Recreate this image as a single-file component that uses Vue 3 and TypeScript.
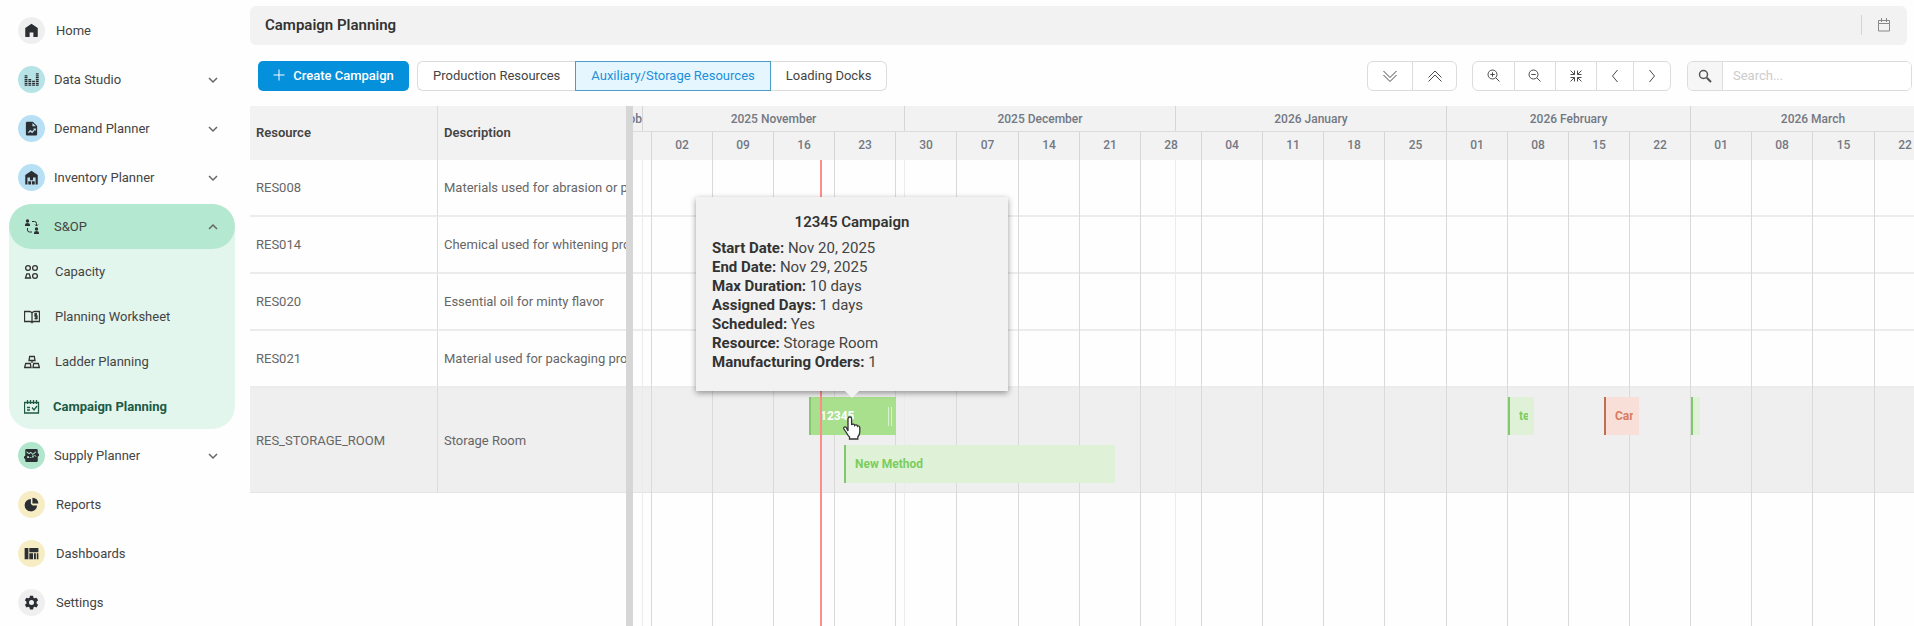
<script setup lang="ts">
import { ref } from 'vue'

interface NavItem {
  label: string
  icon: string
  tone: string
  expandable?: boolean
}

interface Bar {
  name: string
  start: number
  end: number
  lane: number
  kind: 'hover' | 'green' | 'red'
}

interface Resource {
  id: string
  description: string
  bars: Bar[]
}

const topNav: NavItem[] = [
  { label: 'Home', icon: 'home', tone: 'grey' },
  { label: 'Data Studio', icon: 'data', tone: 'teal', expandable: true },
  { label: 'Demand Planner', icon: 'demand', tone: 'blue', expandable: true },
  { label: 'Inventory Planner', icon: 'inventory', tone: 'blue', expandable: true },
]

const subNav = [
  { label: 'Capacity', icon: 'capacity' },
  { label: 'Planning Worksheet', icon: 'worksheet' },
  { label: 'Ladder Planning', icon: 'ladder' },
  { label: 'Campaign Planning', icon: 'campaign' },
]

const bottomNav: NavItem[] = [
  { label: 'Supply Planner', icon: 'supply', tone: 'green', expandable: true },
  { label: 'Reports', icon: 'reports', tone: 'yellow' },
  { label: 'Dashboards', icon: 'dashboards', tone: 'yellow' },
  { label: 'Settings', icon: 'settings', tone: 'grey' },
]

const icons: Record<string, string> = {
  home: 'M12 1 2 8v13q0 1.500 1.500 1.500H9V15h6v7.500h5.500Q22 22.500 22 21V8z',
  data: 'M1 5h4.500v2H1zM1 8h4.500v2H1zM1 11h4.500v2H1zM1 14h4.500v2H1zM1 17h4.500v2H1zM1 20h4.500v2H1zM7 11h4.500v2H7zM7 14h4.500v2H7zM7 17h4.500v2H7zM7 20h4.500v2H7zM13 14h4.500v2H13zM13 17h4.500v2H13zM13 20h4.500v2H13zM19 2h4.500v2H19zM19 5h4.500v2H19zM19 8h4.500v2H19zM19 11h4.500v2H19zM19 14h4.500v2H19zM19 17h4.500v2H19zM19 20h4.500v2H19z',
  demand: 'M14 1H5a2 2 0 0 0-2 2v18a2 2 0 0 0 2 2h14a2 2 0 0 0 2-2V8zM13.500 3 19 8.500h-5.500zM6.500 18l3.500-4 3 2.500 3-3.500-1.500-1H19v4l-1.500-1.500-4.300 5-3.200-2.500-2.300 2.500z',
  inventory: 'M12 1 2 8v15h3.500V12h13v11H22V8zM9.500 12h5v4.500h-5zM6.800 18h4.500v5H6.800zM12.700 18h4.500v5h-4.500z',
  supply: 'M4 1.500h16a2 2 0 0 1 2 2v5l2 1v3l-2 1v7a2 2 0 0 1-2 2H4a2 2 0 0 1-2-2v-3l-2-1v-3l2-1v-9a2 2 0 0 1 2-2zM4 5l4 3 3-2 3 3 5-4v2l-5 4-3-3-3 2-4-3zM5 13h3v3H5zM13 12h2.500v3H13zM17 11l3 2-1 1-3-2zM9 14.500h3v1H9z',
  reports: 'M11 3a10 10 0 1 0 10 10.500H14L11 11zM13.500 1v9.500H23A9.500 9.500 0 0 0 13.500 1z',
  dashboards: 'M1 3h6v18H1zM8.500 3H23v7H8.500zM8.500 11.500h6V21h-6zM16 11.500h3V21h-3zM20.500 11.500H23V21h-2.500z',
  settings: 'M9.500 1h5l.6 3.200 1.900 1.100 3.100-1.100 2.500 4.300-2.500 2.100v2.800l2.500 2.100-2.500 4.300-3.100-1.100-1.900 1.100-.6 3.300h-5l-.6-3.300L7 18.700l-3.100 1.100-2.500-4.300 2.500-2.100v-2.800L1.400 8.500l2.500-4.300L7 5.300l1.900-1.100zM12 8a4 4 0 1 0 0 8 4 4 0 0 0 0-8z',
}

const resourceTypes = ['Production Resources', 'Auxiliary/Storage Resources', 'Loading Docks']
const activeType = ref('Auxiliary/Storage Resources')
const search = ref('')

/* Timeline scale: days are counted from 1 November 2025. */
const pxPerDay = 8.735
const firstDay = 10
const at = (day: number): number => Math.round(firstDay + day * pxPerDay)

const months = [
  { label: '2025 November', start: 0, end: 30 },
  { label: '2025 December', start: 30, end: 61 },
  { label: '2026 January', start: 61, end: 92 },
  { label: '2026 February', start: 92, end: 120 },
  { label: '2026 March', start: 120, end: 148 },
]
const weeks = [
  '02', '09', '16', '23', '30', '07', '14', '21', '28', '04', '11',
  '18', '25', '01', '08', '15', '22', '01', '08', '15', '22',
].map((label, i) => ({ label, start: 1 + i * 7, end: 8 + i * 7 }))

const today = 20.4

const resources: Resource[] = [
  { id: 'RES008', description: 'Materials used for abrasion or polishing', bars: [] },
  { id: 'RES014', description: 'Chemical used for whitening products', bars: [] },
  { id: 'RES020', description: 'Essential oil for minty flavor', bars: [] },
  { id: 'RES021', description: 'Material used for packaging products', bars: [] },
  {
    id: 'RES_STORAGE_ROOM',
    description: 'Storage Room',
    bars: [
      { name: '12345', start: 19, end: 29, lane: 0, kind: 'hover' },
      { name: 'New Method', start: 23, end: 54, lane: 1, kind: 'green' },
      { name: 'test', start: 99, end: 102, lane: 0, kind: 'green' },
      { name: 'Campaign', start: 110, end: 114, lane: 0, kind: 'red' },
      { name: '', start: 120, end: 121, lane: 0, kind: 'green' },
    ],
  },
]

const details = [
  ['Start Date', 'Nov 20, 2025'],
  ['End Date', 'Nov 29, 2025'],
  ['Max Duration', '10 days'],
  ['Assigned Days', '1 days'],
  ['Scheduled', 'Yes'],
  ['Resource', 'Storage Room'],
  ['Manufacturing Orders', '1'],
]

const span = (start: number, end: number) => ({ width: `${at(end) - at(start)}px` })
const barBox = (b: Bar) => ({ left: `${at(b.start)}px`, width: `${at(b.end) - at(b.start)}px` })
const barCentre = (b: Bar) => ({ left: `${Math.floor((at(b.start) + at(b.end)) / 2)}px` })
</script>

<template>
  <div class="page">
    <nav class="sidebar" aria-label="Main">
      <a v-for="item in topNav" :key="item.label" href="#" class="item" :class="{ leaf: !item.expandable }">
        <span class="disc" :class="item.tone">
          <svg viewBox="0 0 24 24" width="15" height="15" fill-rule="evenodd"><path :d="icons[item.icon]" /></svg>
        </span>
        <span class="label">{{ item.label }}</span>
        <svg v-if="item.expandable" class="chevron" viewBox="0 0 10 10" width="10" height="10"><path d="M1 3l4 4 4-4" /></svg>
      </a>

      <div class="group">
        <a href="#" class="item open">
          <span class="disc">
            <svg viewBox="0 0 16 16" width="16" height="16">
              <circle cx="3.500" cy="2" r="1.700" />
              <path d="M1 7V5.500Q1 4 3.500 4T6 5.500V7z" />
              <circle cx="12.500" cy="10" r="1.700" />
              <path d="M10 15v-1.500q0-1.500 2.500-1.500t2.500 1.500V15z" />
              <path class="line" d="M8 2.500h2.500q2 0 2 2V7M11 5.500 12.500 7 14 5.500M3.500 9v2q0 2 2 2H8" />
            </svg>
          </span>
          <span class="label">S&amp;OP</span>
          <svg class="chevron" viewBox="0 0 10 10" width="10" height="10"><path d="M1 7l4-4 4 4" /></svg>
        </a>
        <a
          v-for="item in subNav"
          :key="item.label"
          href="#"
          class="item sub"
          :class="{ current: item.icon === 'campaign' }"
        >
          <span class="glyph">
            <svg v-if="item.icon === 'capacity'" viewBox="0 0 16 16" width="16" height="16">
              <circle cx="4" cy="4" r="2.400" /><circle cx="11" cy="4" r="2.400" />
              <path d="M1.500 14 2.800 9.800h2.400L6.500 14z" /><circle cx="11" cy="12" r="2.400" />
            </svg>
            <svg v-else-if="item.icon === 'worksheet'" viewBox="0 0 16 16" width="16" height="16">
              <path d="M8 4Q7 2.500 5.500 2.500h-5v10H6q1.500 0 2 1 .5-1 2-1h5.500v-10h-5Q9 2.500 8 4zM8 4v9M13 5h-2v2h2v2.500h-2.500M12 4v6.500" />
            </svg>
            <svg v-else-if="item.icon === 'ladder'" viewBox="0 0 16 16" width="16" height="16">
              <path d="M5.700 2.500h4.600l.7 4H5zM8 6.500v2.500M1.700 9.500h4.600l.7 4H.6zM9.700 9.500h4.600l1.100 4H9z" />
            </svg>
            <svg v-else viewBox="0 0 16 16" width="16" height="16">
              <path d="M.5 3.500h14v10.500H.5zM3.500 1v4M6.500 1v4M9.500 1v4M12.500 1v4M3 8.500h3M3 11h3M8 8.500l2 2.500 3-4" />
            </svg>
          </span>
          <span class="label">{{ item.label }}</span>
        </a>
      </div>

      <a v-for="item in bottomNav" :key="item.label" href="#" class="item" :class="{ leaf: !item.expandable }">
        <span class="disc" :class="item.tone">
          <svg viewBox="0 0 24 24" width="15" height="15" fill-rule="evenodd"><path :d="icons[item.icon]" /></svg>
        </span>
        <span class="label">{{ item.label }}</span>
        <svg v-if="item.expandable" class="chevron" viewBox="0 0 10 10" width="10" height="10"><path d="M1 3l4 4 4-4" /></svg>
      </a>
    </nav>

    <main class="main">
      <header class="titlebar">
        <h1>Campaign Planning</h1>
        <button type="button" class="calendar" aria-label="Calendar">
          <svg viewBox="0 0 14 14" width="14" height="14"><path d="M1.500 2.500h11v10.500h-11zM1.500 5.500h11M4.500 0v4M9.500 0v4" /></svg>
        </button>
      </header>

      <div class="toolbar">
        <button type="button" class="create">
          <svg viewBox="0 0 12 12" width="12" height="12"><path d="M6 .5v11M.5 6h11" /></svg>
          Create Campaign
        </button>
        <div class="segments" role="group" aria-label="Resource type">
          <button
            v-for="type in resourceTypes"
            :key="type"
            type="button"
            :class="{ active: type === activeType }"
            @click="activeType = type"
          >
            {{ type }}
          </button>
        </div>

        <div class="tools expand">
          <button type="button" aria-label="Expand all">
            <svg viewBox="0 0 16 16" width="16" height="16"><path d="M1.500 3 8 9.500 14.500 3M1.500 7 8 13.500 14.500 7" /></svg>
          </button>
          <button type="button" aria-label="Collapse all">
            <svg viewBox="0 0 16 16" width="16" height="16"><path d="M1.500 9.500 8 3l6.500 6.500M1.500 13.500 8 7l6.500 6.500" /></svg>
          </button>
        </div>
        <div class="tools zoom">
          <button type="button" aria-label="Zoom in">
            <svg viewBox="0 0 14 14" width="14" height="14"><circle cx="5.500" cy="5.500" r="4.500" /><path d="M8.800 8.800 12.500 12.500M3.300 5.500h4.400M5.500 3.300v4.400" /></svg>
          </button>
          <button type="button" aria-label="Zoom out">
            <svg viewBox="0 0 14 14" width="14" height="14"><circle cx="5.500" cy="5.500" r="4.500" /><path d="M8.800 8.800 12.500 12.500M3.300 5.500h4.400" /></svg>
          </button>
          <button type="button" aria-label="Zoom to fit">
            <svg viewBox="0 0 14 14" width="14" height="14">
              <path d="M1.500 1.500 5.500 5.500M12.500 1.500l-4 4M1.500 12.500l4-4M12.500 12.500l-4-4M5.500 1.500v4h-4M8.500 1.500v4h4M5.500 12.500v-4h-4M8.500 12.500v-4h4" />
            </svg>
          </button>
          <button type="button" class="narrow" aria-label="Previous">
            <svg viewBox="0 0 14 14" width="14" height="14"><path d="M9.500 1 4.500 7l5 6" /></svg>
          </button>
          <button type="button" class="narrow" aria-label="Next">
            <svg viewBox="0 0 14 14" width="14" height="14"><path d="M4.500 1l5 6-5 6" /></svg>
          </button>
        </div>
        <div class="search">
          <label for="search" aria-label="Search">
            <svg viewBox="0 0 14 14" width="14" height="14"><circle cx="5.500" cy="5.500" r="4" /><path class="handle" d="M8.800 8.800 13 13" /></svg>
          </label>
          <input id="search" v-model="search" type="text" placeholder="Search..." />
        </div>
      </div>

      <section class="gantt">
        <div class="grid">
          <table>
            <thead>
              <tr>
                <th scope="col">Resource</th>
                <th scope="col">Description</th>
              </tr>
            </thead>
            <tbody>
              <tr v-for="r in resources" :key="r.id" :class="{ selected: r.bars.length }">
                <td>{{ r.id }}</td>
                <td>{{ r.description }}</td>
              </tr>
            </tbody>
          </table>
        </div>
        <div class="splitter"></div>

        <div class="timeline">
          <div class="scale months">
            <div class="cell lead" :style="{ width: `${at(0)}px` }">ob</div>
            <div v-for="m in months" :key="m.label" class="cell" :style="span(m.start, m.end)">{{ m.label }}</div>
          </div>
          <div class="scale weeks">
            <div class="cell" :style="{ width: `${at(1)}px` }"></div>
            <div v-for="w in weeks" :key="w.start" class="cell" :style="span(w.start, w.end)">{{ w.label }}</div>
          </div>

          <div class="rows">
            <div v-for="r in resources" :key="r.id" class="row" :class="{ selected: r.bars.length }">
              <template v-for="b in r.bars" :key="b.start">
                <div class="bar" :class="[b.kind, `lane${b.lane}`, { blank: !b.name }]" :style="barBox(b)">
                  <span class="name">{{ b.name }}</span>
                  <span v-if="b.kind === 'hover'" class="grip"></span>
                </div>
                <div v-if="b.kind === 'hover'" class="tooltip" role="tooltip" :style="barCentre(b)">
                  <h2>{{ b.name }} Campaign</h2>
                  <p v-for="[key, value] in details" :key="key"><b>{{ key }}:</b> {{ value }}</p>
                </div>
                <svg
                  v-if="b.kind === 'hover'"
                  class="pointer"
                  :style="barCentre(b)"
                  viewBox="0 0 18 24"
                  width="18"
                  height="24"
                >
                  <path d="M5 15V2.800a1.800 1.800 0 0 1 3.600 0V9q.4-1 1.600-.9 1.300.1 1.500 1.300.5-.7 1.500-.5 1.100.2 1.300 1.300.5-.4 1.200-.2 1.100.3 1.100 1.600v4.200q0 3-2 5.200V23H6.500v-2Q4.500 19 3.300 16.500L.9 13q-.6-1.300.5-2 1-.5 2 .6z" />
                </svg>
              </template>
            </div>

            <i v-for="m in months" :key="m.label" class="rule month" :style="{ left: `${at(m.start) - 1}px` }"></i>
            <i v-for="w in weeks" :key="w.start" class="rule" :style="{ left: `${at(w.start) - 1}px` }"></i>
            <i class="now" :style="{ left: `${at(today) - 1}px` }"></i>
          </div>
        </div>
      </section>
    </main>
  </div>
</template>

<style>
html,
body {
  margin: 0;
  background: #fefefe;
}
</style>

<style scoped>
* {
  box-sizing: border-box;
}

.page {
  display: flex;
  height: 100vh;
  overflow: hidden;
  font-family: Roboto, 'Liberation Sans', sans-serif;
  font-size: 13px;
  color: #444;
}

button,
input {
  font: inherit;
}

svg {
  display: block;
}

/* Sidebar */
.sidebar {
  display: flex;
  flex: none;
  flex-direction: column;
  gap: 4px;
  width: 250px;
  padding: 8px 15px 0 9px;
}

.item {
  display: flex;
  flex: none;
  align-items: center;
  height: 45px;
  padding: 0 17px 0 9px;
  color: #444;
  text-decoration: none;
}

.label {
  flex: 1;
  margin-left: 9px;
  white-space: nowrap;
}

.leaf .label {
  margin-left: 11px;
}

.sub .label {
  margin-left: 10px;
}

.disc {
  display: flex;
  align-items: center;
  justify-content: center;
  width: 27px;
  height: 27px;
  border-radius: 50%;
  fill: #2b2f33;
}

.grey { background: #efefef; }
.teal { background: #b5e3e6; }
.blue { background: #b7e0f4; }
.green { background: #b1e6cd; }
.yellow { background: #f6edc4; }

.line,
.chevron {
  fill: none;
  stroke: #2b2f33;
}

.chevron {
  stroke: #666;
  stroke-width: 1.5;
}

.group {
  border-radius: 23px;
  background: #e3f6ed;
}

.open {
  border-radius: 23px;
  background: #b5e8d0;
}

.glyph {
  display: flex;
  justify-content: center;
  width: 27px;
  fill: none;
  stroke: #333;
  stroke-width: 1.3;
}

.current {
  color: #205a45;
  font-weight: 700;
}

.current .label {
  margin-left: 8px;
}

.current .glyph {
  stroke: #205a45;
}

/* Title bar and toolbar */
.main {
  display: flex;
  flex: 1;
  flex-direction: column;
  min-width: 0;
}

.titlebar {
  display: flex;
  flex: none;
  align-items: center;
  justify-content: space-between;
  height: 39px;
  margin: 6px 7px 0 0;
  padding: 0 16px 2px 15px;
  border-radius: 6px;
  background: #f2f2f2;
}

h1 {
  margin: 0;
  color: #333;
  font-size: 15px;
  font-weight: 600;
}

.calendar {
  padding: 3px 0 3px 15px;
  border: 0;
  border-left: 1px solid #d4d4d4;
  background: none;
  fill: none;
  stroke: #888;
}

.toolbar {
  display: flex;
  flex: none;
  align-items: center;
  height: 30px;
  margin: 16px 2px 15px 8px;
}

.toolbar button {
  display: flex;
  align-items: center;
  justify-content: center;
  height: 30px;
  white-space: nowrap;
}

.toolbar .create {
  gap: 8px;
  width: 151px;
  padding: 0 0 2px;
  border: 0;
  border-radius: 5px;
  background: #0490da;
  color: #fff;
  font-weight: 500;
  stroke: #fff;
}

.segments {
  display: flex;
  margin-left: 8px;
}

.segments button {
  padding: 0 15px 2px;
  border: 1px solid #dcdcdc;
  background: #fff;
  color: #444;
}

.segments button:first-child {
  border-right: 0;
  border-radius: 6px 0 0 6px;
}

.segments button:last-child {
  border-left: 0;
  border-radius: 0 6px 6px 0;
}

.segments .active {
  border-color: #4b9cc8;
  background: #e6f6fe;
  color: #1c90da;
}

.tools {
  display: flex;
  margin-left: 15px;
  border: 1px solid #dcdcdc;
  border-radius: 6px;
  background: #fff;
}

.tools button {
  width: 41px;
  height: 28px;
  padding: 0;
  border: 0;
  background: none;
  fill: none;
  stroke: #4a4a4a;
}

.tools button + button {
  border-left: 1px solid #dcdcdc;
}

.tools .narrow {
  width: 37px;
}

.tools.expand {
  margin-left: auto;
}

.expand button {
  width: 44px;
}

.search {
  display: flex;
  width: 225px;
  margin-left: 16px;
  border: 1px solid #dcdcdc;
  border-radius: 6px;
  overflow: hidden;
}

.search label {
  display: flex;
  align-items: center;
  justify-content: center;
  width: 34px;
  background: #f6f6f6;
  fill: none;
  stroke: #555;
  stroke-width: 1.5;
}

.handle {
  stroke-width: 2;
}

.search input {
  flex: 1;
  min-width: 0;
  height: 28px;
  padding: 0 10px 2px;
  border: 0;
  border-left: 1px solid #dcdcdc;
  outline: 0;
}

.search input::placeholder {
  color: #ccc;
}

/* Resource table */
.gantt {
  display: flex;
  flex: 1;
  min-height: 0;
}

.grid {
  flex: none;
  width: 376px;
  overflow: hidden;
}

table {
  width: 100%;
  border-spacing: 0;
  table-layout: fixed;
}

th,
td {
  padding: 0 0 0 6px;
  overflow: hidden;
  text-align: left;
  white-space: nowrap;
}

th:first-child,
td:first-child {
  border-right: 1px solid #dcdcdc;
}

th {
  height: 54px;
  padding-bottom: 2px;
  background: #f2f2f2;
  color: #444;
  font-weight: 600;
}

td {
  height: 57px;
  border-bottom: 2px solid #ececec;
  color: #666;
}

.selected td {
  height: 105px;
  border-bottom: 1px solid #e4e4e4;
  background: #efefef;
}

.splitter {
  flex: none;
  width: 7px;
  background: #d6d6d6;
}

/* Timeline */
.timeline {
  display: flex;
  flex: 1;
  flex-direction: column;
  min-width: 0;
  overflow: hidden;
}

.scale {
  display: flex;
  flex: none;
  background: #f2f2f2;
  color: #737883;
  font-size: 12px;
  font-weight: 500;
}

.cell {
  display: flex;
  flex: none;
  align-items: center;
  justify-content: center;
  border-right: 1px solid #d6d6d6;
  overflow: hidden;
}

.months {
  height: 26px;
  border-bottom: 1px solid #dcdcdc;
}

.months .lead {
  justify-content: flex-end;
}

.weeks {
  height: 28px;
}

.weeks .cell {
  padding-bottom: 2px;
}

.rows {
  position: relative;
  flex: 1;
}

.row {
  position: relative;
  height: 57px;
  border-bottom: 2px solid #ececec;
}

.row.selected {
  height: 105px;
  border-bottom: 1px solid #e4e4e4;
  background: #efefef;
}

.rule {
  position: absolute;
  top: 0;
  bottom: 0;
  width: 1px;
  background: #dadada;
}

.month {
  background: #ebebeb;
}

.now {
  position: absolute;
  z-index: 2;
  top: 0;
  bottom: 0;
  width: 2px;
  background: #ff8c8c;
}

.bar {
  position: absolute;
  z-index: 1;
  display: flex;
  align-items: center;
  justify-content: space-between;
  height: 38px;
  padding: 0 6px 0 9px;
  border-left: 2px solid #80c86b;
  background: #dff2d8;
  color: #7bcd5c;
  font-size: 12px;
  font-weight: 700;
  white-space: nowrap;
}

.blank {
  padding: 0;
}

.name {
  min-width: 0;
  overflow: hidden;
}

.lane0 { top: 9px; }
.lane1 { top: 57px; }

.hover {
  padding-right: 4px;
  border-color: #86c870;
  background: #a9e08e;
  color: #fff;
}

.red {
  border-color: #bf6d55;
  background: #f8dfd8;
  color: #d77b61;
}

.grip {
  width: 4px;
  height: 19px;
  border: 1px solid #d9f2cd;
  border-width: 0 1px;
}

.tooltip {
  position: absolute;
  z-index: 3;
  bottom: 101px;
  width: 312px;
  padding: 16px 16px 19px;
  transform: translateX(-50%);
  background: #f2f2f2;
  box-shadow: 0 2px 6px rgba(0, 0, 0, 0.4);
  color: #444;
  font-size: 15px;
  line-height: 19px;
}

.tooltip::after {
  position: absolute;
  top: 100%;
  left: 50%;
  margin-left: -7px;
  border: 7px solid transparent;
  border-top-color: #f2f2f2;
  border-bottom: 0;
  content: '';
}

.tooltip h2 {
  margin: 0 0 7px;
  color: #333;
  font-size: 15px;
  font-weight: 600;
  text-align: center;
}

.tooltip p {
  margin: 0;
}

.tooltip b {
  color: #333;
}

.pointer {
  position: absolute;
  z-index: 4;
  top: 28px;
  margin-left: -9px;
  fill: #fff;
  stroke: #333;
  stroke-width: 1.3;
}
</style>
